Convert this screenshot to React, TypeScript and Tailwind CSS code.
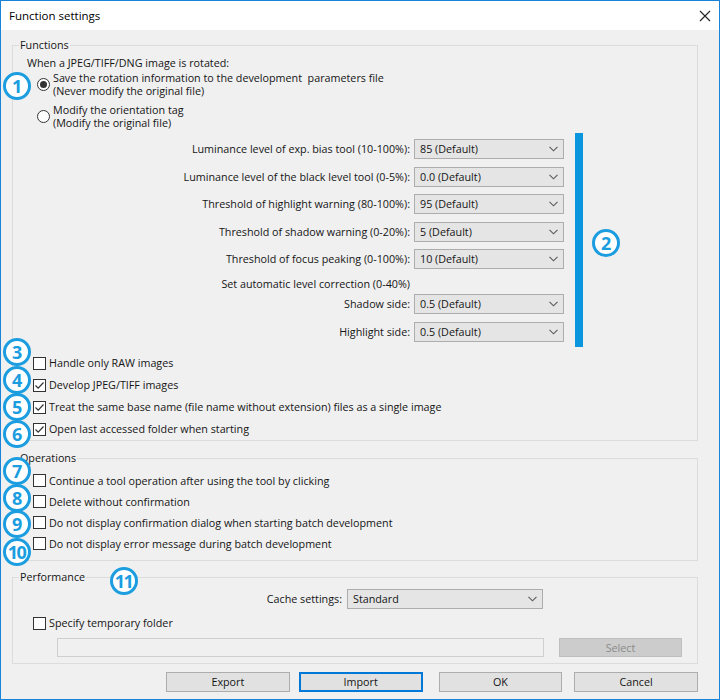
import React from "react";

const FONT = { fontFamily: '"Open Sans", "Noto Sans", sans-serif' };

function Callout({ n, x, y }: { n: string; x: number; y: number }) {
  return (
    <div
      className="absolute w-[28px] h-[28px] rounded-full border-[3px] border-[#1b9de0] bg-white flex items-center justify-center text-[#1b9de0] font-bold text-[18px] leading-none tracking-[-1.5px]"
      style={{ left: x - 15, top: y - 15 }}
    >
      <span className="mt-[-1px] mr-[1px]">{n}</span>
    </div>
  );
}

function Chevron() {
  return (
    <svg width="9" height="6" viewBox="0 0 9 6" className="shrink-0">
      <path d="M0.5 0.8 L4.5 4.8 L8.5 0.8" fill="none" stroke="#5a5a5a" strokeWidth="1.1" />
    </svg>
  );
}

function Select({ value, w }: { value: string; w: string }) {
  return (
    <div
      className={`${w} h-[20px] bg-[#e5e5e5] border border-[#adadad] flex items-center justify-between pl-[5px] pr-[5px]`}
    >
      <span>{value}</span>
      <Chevron />
    </div>
  );
}

function Check({ checked }: { checked?: boolean }) {
  return (
    <div className="w-[13px] h-[13px] border border-[#333333] bg-white shrink-0 flex items-center justify-center">
      {checked && (
        <svg width="11" height="11" viewBox="0 0 11 11">
          <path d="M1.5 5.5 L4.2 8.2 L9.5 2.5" fill="none" stroke="#333333" strokeWidth="1.2" />
        </svg>
      )}
    </div>
  );
}

function Radio({ checked }: { checked?: boolean }) {
  return (
    <div className="w-[13px] h-[13px] rounded-full border border-[#333333] bg-white shrink-0 flex items-center justify-center">
      {checked && <div className="w-[7px] h-[7px] rounded-full bg-[#333333]" />}
    </div>
  );
}

function CheckRow({ label, checked, h }: { label: string; checked?: boolean; h: string }) {
  return (
    <div className={`flex items-center ${h} pl-[20px]`}>
      <Check checked={checked} />
      <span className="ml-[3px]">{label}</span>
    </div>
  );
}

function DropRow({ label, value }: { label: string; value: string }) {
  return (
    <div className="flex items-center justify-end h-[20px]">
      <span className="mr-[4px]">{label}</span>
      <Select value={value} w="w-[150px]" />
    </div>
  );
}

function Button({ label, focused, cls }: { label: string; focused?: boolean; cls: string }) {
  return (
    <div
      className={`${cls} w-[124px] h-[20px] bg-[#e1e1e1] flex items-center justify-center ${
        focused ? "border-2 border-[#0078d7]" : "border border-[#adadad]"
      }`}
    >
      {label}
    </div>
  );
}

export default function App() {
  return (
    <div
      className="relative w-[720px] h-[700px] border border-[#1883d7] bg-[#f0f0f0] text-[10.75px] leading-[14px] text-[#151515] overflow-hidden"
      style={FONT}
    >
      {/* Title bar */}
      <div className="h-[29px] bg-white flex items-center justify-between pl-[8px] pr-[8px]">
        <span className="text-[11.5px] text-black mt-[1px]">Function settings</span>
        <svg width="12" height="12" viewBox="0 0 12 12">
          <path d="M1 1 L11 11 M11 1 L1 11" stroke="#222" strokeWidth="1.1" />
        </svg>
      </div>

      <div className="pl-[11px] pr-[21px]">
        {/* Functions */}
        <fieldset className="mt-[8px] border border-[#dcdcdc] pb-0">
          <legend className="ml-[6px] px-[1px] leading-[14px]">Functions</legend>
          <div className="pl-[14px] mt-[3.5px] h-[14px]">When a JPEG/TIFF/DNG image is rotated:</div>
          <div className="flex items-center pl-[24px] mt-[2px] leading-[13px]">
            <Radio checked />
            <div className="ml-[3px]">
              <div>Save the rotation information to the development&nbsp; parameters file</div>
              <div>(Never modify the original file)</div>
            </div>
          </div>
          <div className="flex items-center pl-[24px] mt-[6px] leading-[13px]">
            <Radio />
            <div className="ml-[3px]">
              <div>Modify the orientation tag</div>
              <div>(Modify the original file)</div>
            </div>
          </div>

          <div className="flex mt-[3.5px] h-[214px]">
            <div className="w-[551px] pt-[6px] flex flex-col gap-[7.5px]">
              <DropRow label="Luminance level of exp. bias tool (10-100%):" value="85 (Default)" />
              <DropRow label="Luminance level of the black level tool (0-5%):" value="0.0 (Default)" />
              <DropRow label="Threshold of highlight warning (80-100%):" value="95 (Default)" />
              <DropRow label="Threshold of shadow warning (0-20%):" value="5 (Default)" />
              <DropRow label="Threshold of focus peaking (0-100%):" value="10 (Default)" />
              <div className="flex justify-end h-[14px] mt-[0.5px]">
                <span className="mr-[154px]">Set automatic level correction (0-40%)</span>
              </div>
              <div className="mt-[-4.5px]">
                <DropRow label="Shadow side:" value="0.5 (Default)" />
              </div>
              <DropRow label="Highlight side:" value="0.5 (Default)" />
            </div>
            <div className="ml-[11px] w-[8px] bg-[#0a96dd]" />
          </div>

          <div className="mt-[5px]">
            <CheckRow h="h-[22px]" label="Handle only RAW images" />
            <CheckRow h="h-[22px]" label="Develop JPEG/TIFF images" checked />
            <CheckRow
              h="h-[22px]"
              label="Treat the same base name (file name without extension) files as a single image"
              checked
            />
            <CheckRow h="h-[22px]" label="Open last accessed folder when starting" checked />
          </div>
        </fieldset>

        {/* Operations */}
        <fieldset className="mt-[10px] border border-[#dcdcdc] pb-[6px]">
          <legend className="ml-[6px] px-[1px] leading-[14px]">Operations</legend>
          <div className="mt-[5px]">
            <CheckRow h="h-[21px]" label="Continue a tool operation after using the tool by clicking" />
            <CheckRow h="h-[21px]" label="Delete without confirmation" />
            <CheckRow h="h-[21px]" label="Do not display confirmation dialog when starting batch development" />
            <CheckRow h="h-[21px]" label="Do not display error message during batch development" />
          </div>
        </fieldset>

        {/* Performance */}
        <fieldset className="mt-[9px] border border-[#dcdcdc] pb-[6px]">
          <legend className="ml-[6px] px-[1px] leading-[14px]">Performance</legend>
          <div className="flex items-center justify-end w-[530px] mt-[5px]">
            <span className="mr-[5px]">Cache settings:</span>
            <Select value="Standard" w="w-[196px]" />
          </div>
          <div className="mt-[6px] h-[16px]">
            <CheckRow h="h-[16px]" label="Specify temporary folder" />
          </div>
          <div className="flex items-center mt-[7px] pl-[44px]">
            <div className="w-[487px] h-[19px] border border-[#cfcfcf] bg-[#f0f0f0]" />
            <div className="ml-[15px] w-[123px] h-[19px] bg-[#cccccc] border border-[#bfbfbf] flex items-center justify-center text-[#8a8a8a]">
              Select
            </div>
          </div>
        </fieldset>

        {/* Buttons */}
        <div className="flex mt-[8px]">
          <Button cls="ml-[154px]" label="Export" />
          <Button cls="ml-[9px]" label="Import" focused />
          <Button cls="ml-[16px]" label="OK" />
          <Button cls="ml-[12px]" label="Cancel" />
        </div>
      </div>

      {/* Callouts */}
      <Callout n="1" x={17} y={86} />
      <Callout n="2" x={606} y={243} />
      <Callout n="3" x={17} y={352} />
      <Callout n="4" x={17} y={380} />
      <Callout n="5" x={17} y={407} />
      <Callout n="6" x={17} y={434} />
      <Callout n="7" x={17} y={471} />
      <Callout n="8" x={17} y={498} />
      <Callout n="9" x={17} y={524} />
      <Callout n="10" x={17} y={552} />
      <Callout n="11" x={124} y={581} />
    </div>
  );
}
